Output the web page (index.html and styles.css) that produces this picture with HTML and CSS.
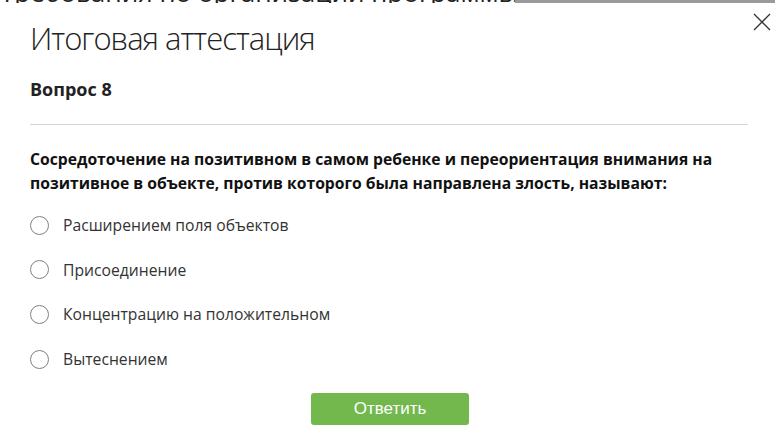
FILE: index.html
```html
<!DOCTYPE html>
<html lang="ru">
<head>
    <meta charset="UTF-8">
    <title>Итоговая аттестация</title>
    <link rel="stylesheet" href="styles.css">
</head>
<body>
    <div class="backdrop">
        <div class="backdrop-text">Требования по организации программы: воспитание в</div>
    </div>

    <div class="modal">
        <button class="modal-close" aria-label="Закрыть">
            <svg width="18" height="18" viewBox="0 0 18 18">
                <path d="M1 1 L17 17 M17 1 L1 17" stroke="#333" stroke-width="1.3" fill="none"/>
            </svg>
        </button>

        <h1 class="modal-title">Итоговая аттестация</h1>
        <h3 class="question-num">Вопрос 8</h3>

        <div class="question">
            <p class="question-text">Сосредоточение на позитивном в самом ребенке и переориентация внимания на позитивное в объекте, против которого была направлена злость, называют:</p>

            <ul class="answers">
                <li class="answer"><span class="radio"></span>Расширением поля объектов</li>
                <li class="answer"><span class="radio"></span>Присоединение</li>
                <li class="answer"><span class="radio"></span>Концентрацию на положительном</li>
                <li class="answer"><span class="radio"></span>Вытеснением</li>
            </ul>

            <div class="actions">
                <button class="submit-btn">Ответить</button>
            </div>
        </div>
    </div>
</body>
</html>
```

FILE: styles.css
```css
* {
    margin: 0;
    padding: 0;
    box-sizing: border-box;
}

body {
    font-family: "Open Sans", sans-serif;
    background: #ffffff;
    color: #222;
    width: 775px;
    height: 448px;
    overflow: hidden;
}

/* page behind the modal, only its last pixels show */
.backdrop {
    height: 3px;
    background: #9a9a9a;
    overflow: hidden;
    display: flex;
    align-items: flex-end;
}

.backdrop-text {
    flex-shrink: 0;
    height: 30px;
    line-height: 30px;
    font-size: 26px;
    color: #222;
    white-space: nowrap;
    width: 515px;
    overflow: hidden;
    background: #ffffff;
    transform: translateY(4px);
}

.modal {
    position: relative;
    padding: 14px 27px 0 30px;
}

.modal-close {
    position: absolute;
    top: 10px;
    right: 4px;
    border: none;
    background: none;
    width: 18px;
    height: 18px;
    cursor: pointer;
}

.modal-close svg {
    display: block;
}

.modal-title {
    font-size: 31px;
    font-weight: 300;
    line-height: 42px;
    color: #222;
    letter-spacing: -1px;
}

.question-num {
    font-size: 18px;
    font-weight: 700;
    line-height: 24px;
    margin-top: 18px;
    padding-bottom: 23px;
    border-bottom: 1px solid #d6d6d6;
}

.question {
    padding-top: 22px;
}

.question-text {
    font-size: 15.7px;
    font-weight: 700;
    line-height: 24px;
    color: #111;
}

.answers {
    list-style: none;
    margin-top: 20px;
}

.answer {
    display: flex;
    align-items: center;
    gap: 14px;
    font-size: 15.7px;
    line-height: 20px;
    color: #333;
    margin-bottom: 24.7px;
}

.radio {
    width: 19px;
    height: 19px;
    border: 1px solid #808080;
    border-radius: 50%;
    flex-shrink: 0;
}

.actions {
    display: flex;
    justify-content: center;
    margin-top: -1px;
    padding-left: 2px;
}

.submit-btn {
    width: 158px;
    height: 32px;
    background: #72b84d;
    border: none;
    border-radius: 3px;
    color: #ffffff;
    font-family: "Liberation Sans", Arial, sans-serif;
    font-size: 17px;
    cursor: pointer;
}
```
